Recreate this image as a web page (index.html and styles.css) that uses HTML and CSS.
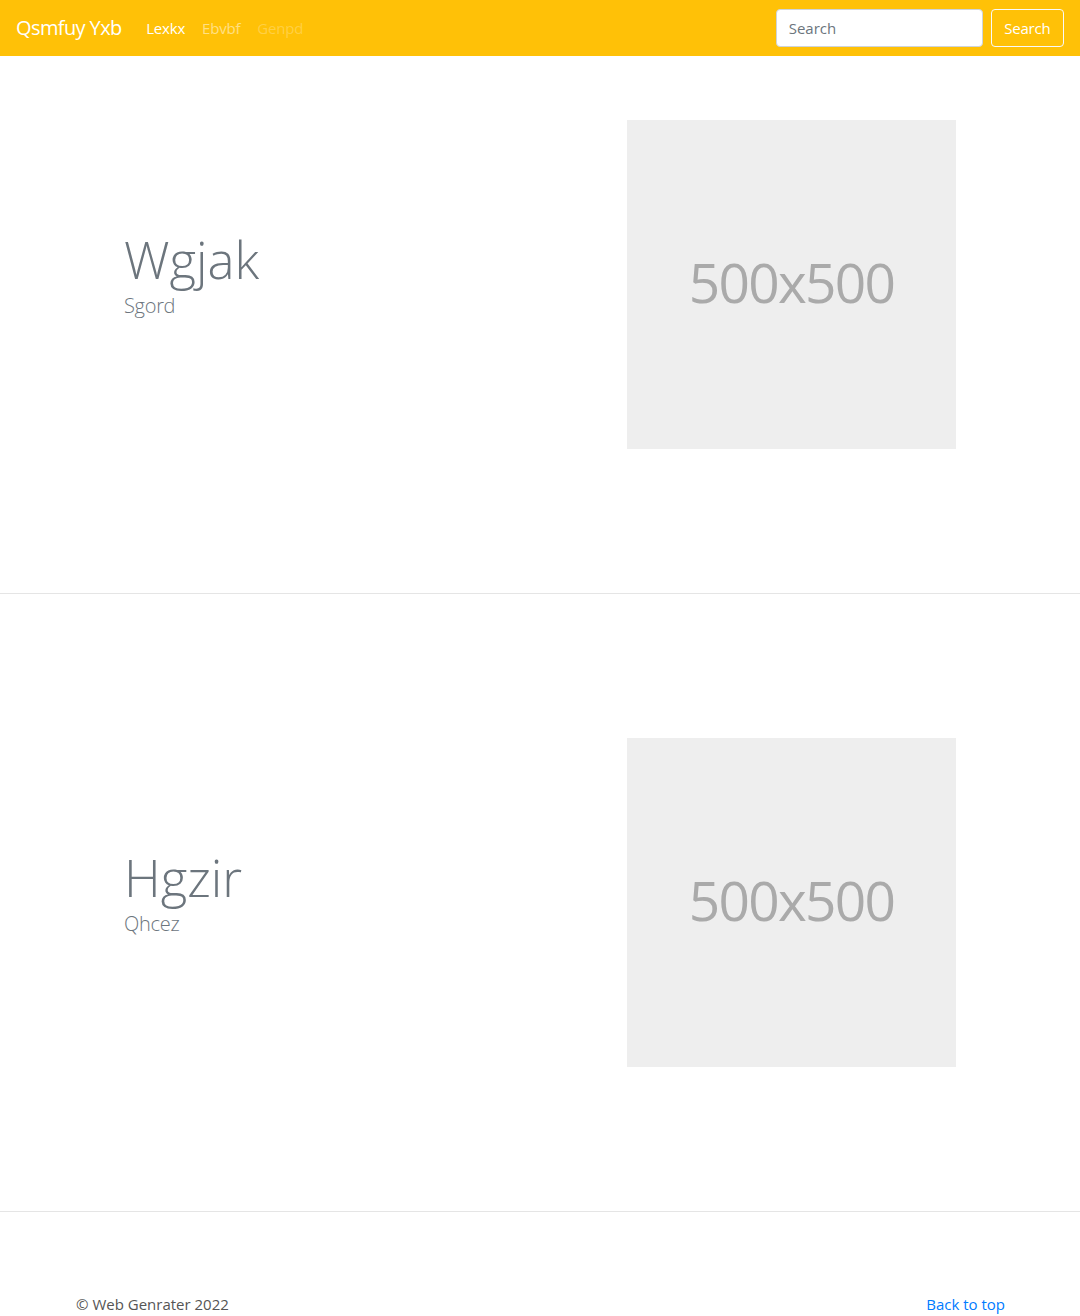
FILE: index.html
```html
<!DOCTYPE html>
<html lang="en">
<head>
<meta charset="utf-8">
<title>Qsmfuy Yxb</title>
<link rel="stylesheet" href="styles.css">
</head>
<body>
<header class="navbar">
  <a class="brand" href="#">Qsmfuy Yxb</a>
  <nav class="nav">
    <a class="nav-link active" href="#">Lexkx</a>
    <a class="nav-link" href="#">Ebvbf</a>
    <a class="nav-link disabled" href="#">Genpd</a>
  </nav>
  <form class="search">
    <input class="search-input" type="text" placeholder="Search">
    <button class="search-btn" type="button">Search</button>
  </form>
</header>
<main>
  <section class="feature first">
    <div class="container row">
      <div class="col text-col">
        <h2 class="heading">Wgjak</h2>
        <p class="lead">Sgord</p>
      </div>
      <div class="col img-col">
        <div class="placeholder">500x500</div>
      </div>
    </div>
  </section>
  <section class="feature">
    <div class="container row">
      <div class="col text-col">
        <h2 class="heading">Hgzir</h2>
        <p class="lead">Qhcez</p>
      </div>
      <div class="col img-col">
        <div class="placeholder">500x500</div>
      </div>
    </div>
  </section>
</main>
<footer class="footer container">
  <p class="copy">© Web Genrater 2022</p>
  <a class="top-link" href="#">Back to top</a>
</footer>
</body>
</html>
```

FILE: styles.css
```css
* { box-sizing: border-box; }
html, body { margin: 0; padding: 0; }
body {
  font-family: "Open Sans", "Noto Sans", Arial, sans-serif;
  font-size: 16px;
  line-height: 1.5;
  color: #212529;
  background: #fff;
}
a { text-decoration: none; }

.navbar {
  height: 56px;
  background: #ffc107;
  display: flex;
  align-items: center;
  padding: 0 16px;
}
.brand {
  color: #fff;
  font-size: 20px;
  line-height: 30px;
  margin-right: 16px;
  letter-spacing: -0.6px;
}
.nav { display: flex; flex: 1; }
.nav-link {
  color: rgba(255,255,255,.5);
  padding: 0 8.5px;
  font-size: 15px;
  letter-spacing: -0.2px;
}
.nav-link.active { color: #fff; }
.nav-link.disabled { color: rgba(255,255,255,.25); }

.search { display: flex; align-items: center; }
.search-input {
  width: 207px;
  height: 38px;
  border: 1px solid #ced4da;
  border-radius: 4px;
  padding: 6px 12px;
  font: inherit;
  font-size: 15px;
  color: #495057;
  margin-right: 8px;
  outline: none;
}
.search-input::placeholder { color: #6c757d; }
.search-btn {
  height: 38px;
  padding: 0 12.5px;
  border: 1px solid #f8f9fa;
  border-radius: 4px;
  background: transparent;
  color: #fff;
  font: inherit;
  font-size: 15px;
  letter-spacing: -0.2px;
}

.container {
  width: 960px;
  margin: 0 auto;
  padding: 0 15px;
}
.feature {
  border-bottom: 1px solid #e5e5e5;
  padding: 144px 0 144px;
}
.feature.first { padding-top: 64px; }
.row { display: flex; align-items: center; }
.col { flex: 1 1 0; padding: 0 48px; }
.text-col { padding-left: 49px; padding-bottom: 18px; }
.img-col { display: flex; justify-content: flex-end; padding-right: 49px; }

.heading {
  margin: 0 0 9px;
  font-size: 51px;
  font-weight: 300;
  line-height: 1;
  color: #6c757d;
}
.lead {
  margin: 0;
  font-size: 20px;
  font-weight: 300;
  line-height: 1.2;
  color: #6c757d;
  letter-spacing: -0.3px;
}
.placeholder {
  width: 329px;
  height: 329px;
  background: #eee;
  color: #aaa;
  display: flex;
  align-items: center;
  justify-content: center;
  font-size: 55px;
  letter-spacing: -1.7px;
  padding-bottom: 4px;
}

.footer {
  display: flex;
  justify-content: space-between;
  padding-top: 81px;
  padding-bottom: 48px;
}
.copy { margin: 0 0 0 1px; color: #555; font-size: 15px; }
.top-link { color: #007bff; font-size: 15px; }
```
